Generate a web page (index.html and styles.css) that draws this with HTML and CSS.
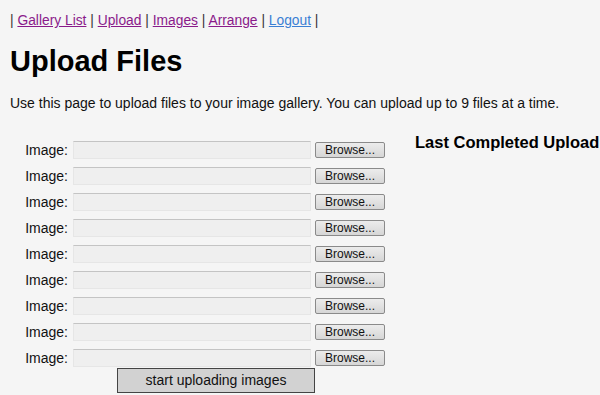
FILE: index.html
```html
<!DOCTYPE html>
<html>
<head>
<meta charset="utf-8">
<link rel="stylesheet" href="styles.css">
</head>
<body>
<div class="nav">| <a class="visited" href="#">Gallery List</a> | <a class="visited" href="#">Upload</a> | <a class="visited" href="#">Images</a> | <a class="visited" href="#">Arrange</a> | <a class="fresh" href="#">Logout</a> |</div>
<h1>Upload Files</h1>
<p class="intro">Use this page to upload files to your image gallery. You can upload up to 9 files at a time.</p>
<div class="main">
  <form class="form">
    <div class="rows">
      <div class="row"><span class="label">Image:</span><span class="field"></span><span class="browse">Browse...</span></div>
      <div class="row"><span class="label">Image:</span><span class="field"></span><span class="browse">Browse...</span></div>
      <div class="row"><span class="label">Image:</span><span class="field"></span><span class="browse">Browse...</span></div>
      <div class="row"><span class="label">Image:</span><span class="field"></span><span class="browse">Browse...</span></div>
      <div class="row"><span class="label">Image:</span><span class="field"></span><span class="browse">Browse...</span></div>
      <div class="row"><span class="label">Image:</span><span class="field"></span><span class="browse">Browse...</span></div>
      <div class="row"><span class="label">Image:</span><span class="field"></span><span class="browse">Browse...</span></div>
      <div class="row"><span class="label">Image:</span><span class="field"></span><span class="browse">Browse...</span></div>
      <div class="row"><span class="label">Image:</span><span class="field"></span><span class="browse">Browse...</span></div>
    </div>
    <div class="submit-wrap"><span class="submit">start uploading images</span></div>
  </form>
  <div class="side">
    <h3>Last Completed Upload</h3>
  </div>
</div>
</body>
</html>
```
FILE: styles.css
```css
html, body { margin: 0; padding: 0; }
body {
  background: #f5f5f5;
  font-family: "Liberation Sans", Arial, sans-serif;
  font-size: 14px;
  color: #111;
  padding: 12px 10px 0 10px;
  overflow: hidden;
  height: 383px;
}
.nav { line-height: 18px; color: #333; font-size: 13.8px; }
.nav a { text-decoration: underline; }
.nav a.visited { color: #8a1a8a; }
.nav a.fresh { color: #3b7fd4; }
h1 {
  font-size: 29px;
  font-weight: bold;
  margin: 14px 0 0 0;
  line-height: 34px;
  color: #000;
}
.intro { margin: 16px 0 0 0; line-height: 18px; }
.main { display: flex; margin-top: 29px; }
.form { width: 380px; flex-shrink: 0; }
.rows { display: flex; flex-direction: column; gap: 8px; }
.row { display: flex; align-items: center; height: 18px; }
.label { width: 58px; text-align: right; margin-right: 5px; }
.field {
  width: 236px;
  height: 16px;
  background: #efefef;
  border: 1px solid #e6e6e6;
  border-top: 1px solid #c4c4c4;
  margin-right: 4px;
}
.browse {
  width: 68px;
  height: 14px;
  border: 1px solid #8a8a8a;
  border-radius: 2px;
  background: linear-gradient(#ececec, #d6d6d6);
  font-size: 12px;
  line-height: 14px;
  text-align: center;
  color: #111;
}
.submit-wrap { padding-left: 107px; margin-top: 1px; }
.submit {
  display: block;
  width: 196px;
  height: 23px;
  border: 1px solid #444;
  background: #d2d2d2;
  text-align: center;
  line-height: 23px;
  font-size: 14px;
  color: #111;
}
.side { margin-left: 25px; margin-top: -8px; flex-shrink: 0; }
.side h3 { margin: 0; font-size: 16.5px; line-height: 18px; font-weight: bold; color: #000; white-space: nowrap; }
```
